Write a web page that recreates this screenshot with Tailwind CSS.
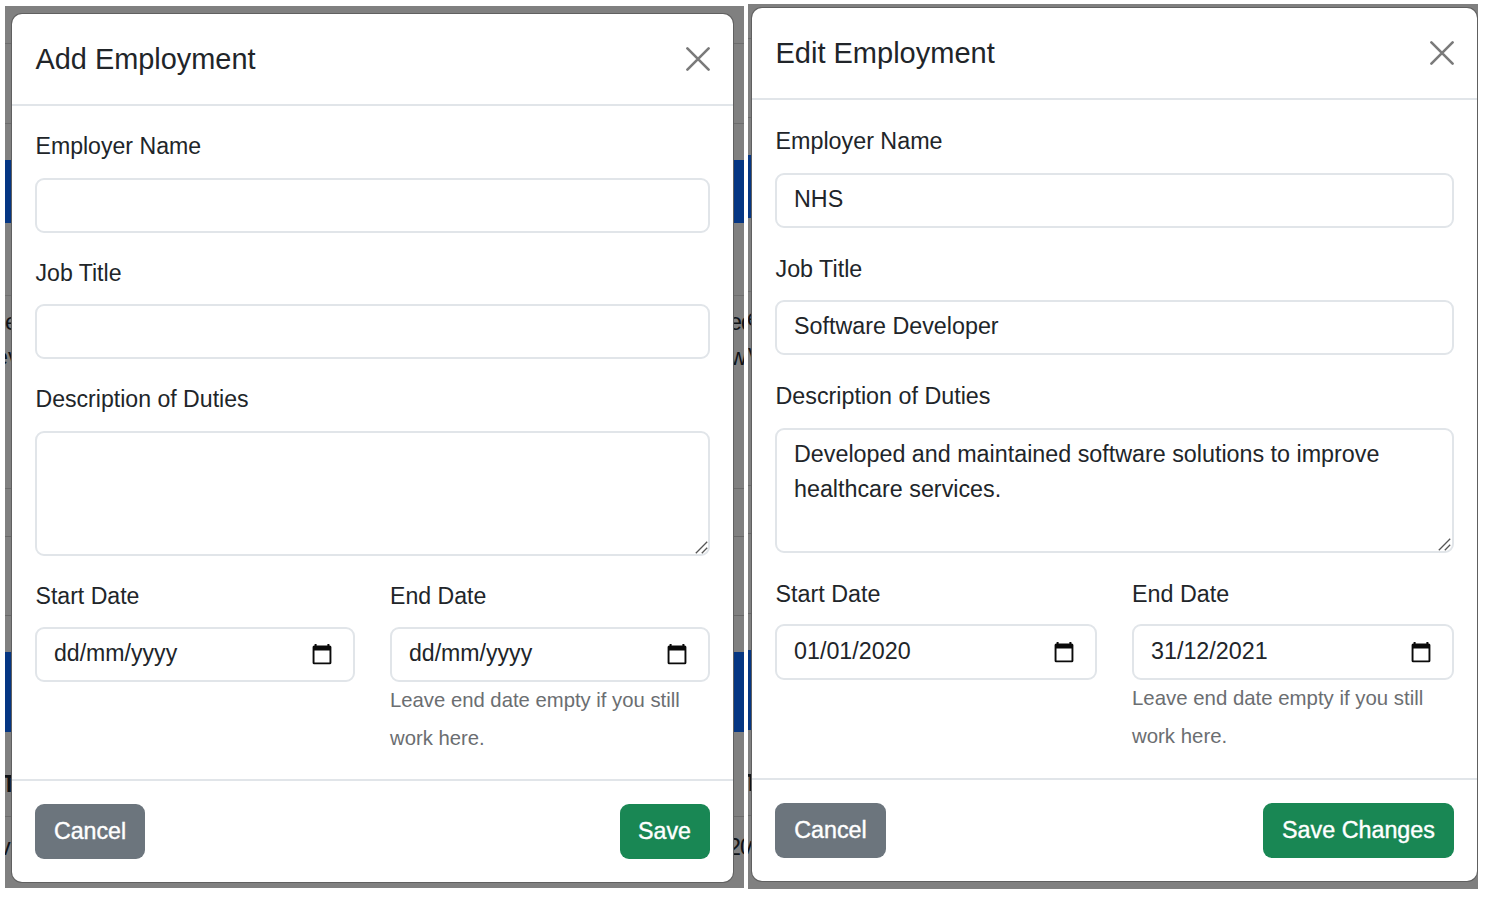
<!DOCTYPE html>
<html lang="en">
<head>
<meta charset="utf-8">
<title>Employment dialogs</title>
<script src="https://cdn.jsdelivr.net/npm/@tailwindcss/browser@4"></script>
</head>
<body class="bg-white w-[1491px] h-[920px] overflow-hidden font-['Liberation_Sans',Arial,sans-serif] text-[#212529]">
<svg class="hidden">
  <symbol id="cal" viewBox="0 0 20 21"><path fill="#0a0a0a" fill-rule="evenodd" d="M2.600 0h2v1.500h10.800V0h2v1.500h.4A1.600 1.600 0 0 1 19.400 3.100v15.600a1.600 1.600 0 0 1-1.600 1.600H2.200A1.600 1.600 0 0 1 .6 18.700V3.100A1.600 1.600 0 0 1 2.200 1.500h.4zM2.500 6.500v12h15v-12z"/></symbol>
  <symbol id="close" viewBox="0 0 24 24"><path d="M1.400 1.400 22.600 22.600M22.600 1.400 1.400 22.600" stroke="#7a7a7a" stroke-width="2.600" stroke-linecap="round" fill="none"/></symbol>
  <symbol id="grip" viewBox="0 0 13 13"><path d="M.8 12.200 12.200.8M6.800 12.200 12.200 6.800" stroke="#555" stroke-width="1.300" fill="none"/></symbol>
</svg>
<main class="flex items-start pl-[5px] pt-1">

  <section class="relative mt-0.5 mr-1 w-[739px] h-[882px] bg-[#808080] overflow-hidden pl-[7px] pt-2 shrink-0">
    <!-- dimmed page behind the dialog -->
    <div class="absolute inset-0 text-[23.3px] leading-[26px] text-[#101317]">
      <i class="absolute inset-x-0 top-[37px] h-px bg-[#6c6c6c]"></i>
      <i class="absolute inset-x-0 top-[117px] h-px bg-[#6c6c6c]"></i>
      <i class="absolute inset-x-0 top-[154px] h-[63px] bg-[#053683]"></i>
      <i class="absolute inset-x-0 top-[289px] h-px bg-[#6f6f6f]"></i>
      <i class="absolute inset-x-0 top-[482px] h-px bg-[#6c6c6c]"></i>
      <i class="absolute inset-x-0 top-[530px] h-px bg-[#686868]"></i>
      <i class="absolute inset-x-0 top-[609px] h-px bg-[#686868]"></i>
      <i class="absolute inset-x-0 top-[646px] h-[80px] bg-[#053683]"></i>
      <i class="absolute inset-x-0 top-[810px] h-px bg-[#6c6c6c]"></i>
      <span class="absolute left-0 top-[303px]">e</span>
      <span class="absolute -left-[10px] top-[338px]">ev</span>
      <span class="absolute -left-[3px] top-[765px] font-bold">T</span>
      <span class="absolute -left-[6px] top-[828px]">v</span>
      <span class="absolute left-[724px] top-[303px] tracking-[-1px]">ed</span>
      <span class="absolute left-[725px] top-[338px] tracking-[-1px]">w</span>
      <span class="absolute left-[723px] top-[828px] tracking-[-1px]">20</span>
    </div>
    <div class="relative w-[721px] h-[868px] bg-white rounded-[10px] shadow-[0_0_0_1px_#606060] flex flex-col">
      <header class="h-[92px] border-b-2 border-[#e1e5e9] flex items-center justify-between pl-[23.5px] pr-[23px] shrink-0">
        <h2 class="text-[28.9px] leading-[44px]">Add Employment</h2>
        <svg class="w-6 h-6"><use href="#close"/></svg>
      </header>
      <div class="px-[23px] pt-[23px] text-[23.1px] leading-[35px] flex flex-col h-[673px] shrink-0">
        <label class="block mb-[14px] pl-[0.5px]">Employer Name</label>
        <div class="h-[55px] border-2 border-[#e1e5e9] rounded-[9px] mb-[23px]"></div>
        <label class="block mb-[13px] pl-[0.5px]">Job Title</label>
        <div class="h-[55px] border-2 border-[#e1e5e9] rounded-[9px] mb-[23px]"></div>
        <label class="block mb-[14px] pl-[0.5px]">Description of Duties</label>
        <div class="h-[125px] border-2 border-[#e1e5e9] rounded-[9px] mb-[23px] flex items-end justify-end"><svg class="w-[13px] h-[13px]"><use href="#grip"/></svg></div>
        <div class="grid grid-cols-2 gap-x-[35px]">
          <div>
            <label class="block mb-[13px] pl-[0.5px]">Start Date</label>
            <div class="h-[55px] border-2 border-[#e1e5e9] rounded-[9px] flex items-center justify-between pl-[17px] pr-[21px]"><span class="-mt-[3px]">dd/mm/yyyy</span><svg class="w-5 h-[21px]"><use href="#cal"/></svg></div>
          </div>
          <div>
            <label class="block mb-[13px]">End Date</label>
            <div class="h-[55px] border-2 border-[#e1e5e9] rounded-[9px] flex items-center justify-between pl-[17px] pr-[21px]"><span class="-mt-[3px]">dd/mm/yyyy</span><svg class="w-5 h-[21px]"><use href="#cal"/></svg></div>
            <p class="text-[20.3px] leading-[37.500px] text-[#6b6e71] whitespace-nowrap">Leave end date empty if you still<br>work here.</p>
          </div>
        </div>
      </div>
      <footer class="border-t-2 border-[#e1e5e9] flex-1 flex items-start justify-between px-[23px] pt-[23px] text-[23.2px] text-white">
        <button class="w-[110px] h-[55px] rounded-[9px] bg-[#6c757d] pb-px [-webkit-text-stroke:0.4px_white]">Cancel</button>
        <button class="w-[90px] h-[55px] rounded-[9px] bg-[#198754] pb-px pr-px [-webkit-text-stroke:0.4px_white]">Save</button>
      </footer>
    </div>
  </section>

  <section class="relative w-[730px] h-[885px] bg-[#808080] overflow-hidden pl-1 pt-1 shrink-0">
    <!-- dimmed page behind the dialog -->
    <div class="absolute inset-0 text-[23.4px] leading-[26px] text-[#101317]">
      <i class="absolute inset-x-0 top-[34px] h-px bg-[#6c6c6c]"></i>
      <i class="absolute inset-x-0 top-[113px] h-px bg-[#6c6c6c]"></i>
      <i class="absolute inset-x-0 top-[151px] h-[63px] bg-[#053683]"></i>
      <i class="absolute inset-x-0 top-[287px] h-px bg-[#6f6f6f]"></i>
      <i class="absolute inset-x-0 top-[481px] h-px bg-[#6c6c6c]"></i>
      <i class="absolute inset-x-0 top-[529px] h-px bg-[#686868]"></i>
      <i class="absolute inset-x-0 top-[609px] h-px bg-[#686868]"></i>
      <i class="absolute inset-x-0 top-[646px] h-[80px] bg-[#053683]"></i>
      <i class="absolute inset-x-0 top-[811px] h-px bg-[#6c6c6c]"></i>
      <span class="absolute -left-[1px] top-[301px]">e</span>
      <span class="absolute left-0 top-[336px]">v</span>
      <span class="absolute -left-[4px] top-[766px] font-bold">T</span>
      <span class="absolute -left-[7px] top-[829px]">v</span>
    </div>
    <div class="relative w-[725px] h-[873px] bg-white rounded-[10px] shadow-[0_0_0_1px_#606060] flex flex-col">
      <header class="h-[92px] border-b-2 border-[#e1e5e9] flex items-center justify-between pl-[23.5px] pr-[23px] shrink-0">
        <h2 class="text-[29px] leading-[44px]">Edit Employment</h2>
        <svg class="w-6 h-6"><use href="#close"/></svg>
      </header>
      <div class="px-[23px] pt-[24px] text-[23.3px] leading-[35px] flex flex-col h-[678px] shrink-0">
        <label class="block mb-[14px] pl-[0.5px]">Employer Name</label>
        <div class="h-[55px] border-2 border-[#e1e5e9] rounded-[9px] mb-[24px] flex items-center pl-[17px]"><span class="-mt-[3px]">NHS</span></div>
        <label class="block mb-[13px] pl-[0.5px]">Job Title</label>
        <div class="h-[55px] border-2 border-[#e1e5e9] rounded-[9px] mb-[24px] flex items-center pl-[17px]"><span class="-mt-[3px]">Software Developer</span></div>
        <label class="block mb-[14px] pl-[0.5px]">Description of Duties</label>
        <div class="relative h-[125px] border-2 border-[#e1e5e9] rounded-[9px] mb-[24px] pl-[17px] pt-[7px]">Developed and maintained software solutions to improve<br>healthcare services.<svg class="absolute right-px bottom-0 w-[13px] h-[13px]"><use href="#grip"/></svg></div>
        <div class="grid grid-cols-2 gap-x-[35px]">
          <div>
            <label class="block mb-[12px] pl-[0.5px]">Start Date</label>
            <div class="h-[56px] border-2 border-[#e1e5e9] rounded-[9px] flex items-center justify-between pl-[17px] pr-[21.500px]"><span class="-mt-[2px]">01/01/2020</span><svg class="w-5 h-[21px]"><use href="#cal"/></svg></div>
          </div>
          <div>
            <label class="block mb-[12px]">End Date</label>
            <div class="h-[56px] border-2 border-[#e1e5e9] rounded-[9px] flex items-center justify-between pl-[17px] pr-[21.500px]"><span class="-mt-[2px]">31/12/2021</span><svg class="w-5 h-[21px]"><use href="#cal"/></svg></div>
            <p class="text-[20.4px] leading-[37.500px] text-[#6b6e71] whitespace-nowrap">Leave end date empty if you still<br>work here.</p>
          </div>
        </div>
      </div>
      <footer class="border-t-2 border-[#e1e5e9] flex-1 flex items-start justify-between px-[23px] pt-[23px] text-[23.3px] text-white">
        <button class="w-[111px] h-[55px] rounded-[9px] bg-[#6c757d] pb-px [-webkit-text-stroke:0.4px_white]">Cancel</button>
        <button class="w-[191px] h-[55px] rounded-[9px] bg-[#198754] pb-px [-webkit-text-stroke:0.4px_white]">Save Changes</button>
      </footer>
    </div>
  </section>
</main>
</body>
</html>
